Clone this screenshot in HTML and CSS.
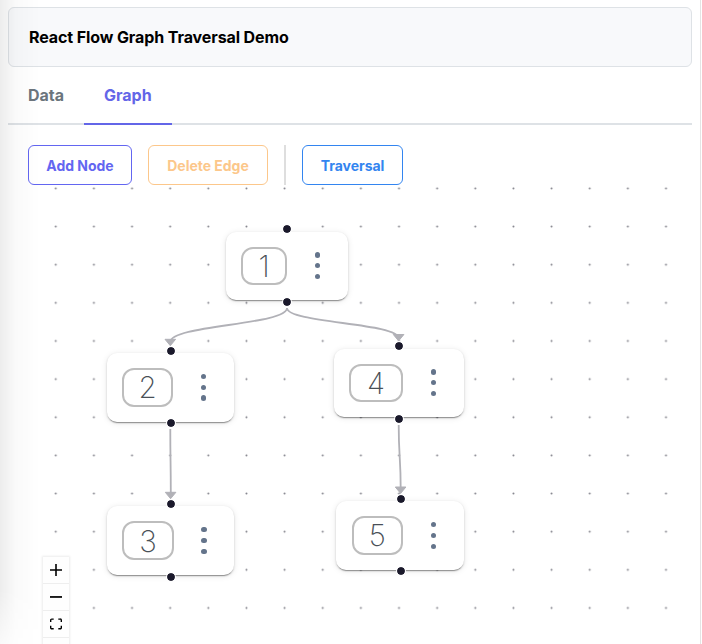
FILE: index.html
```html
<!DOCTYPE html>
<html lang="en">
<head>
<meta charset="utf-8">
<title>React Flow Graph Traversal Demo</title>
<link rel="stylesheet" href="styles.css">
</head>
<body>
<div class="page">
  <header class="header"><span class="title">React Flow Graph Traversal Demo</span></header>
  <nav class="tabs">
    <a class="tab tab-data">Data</a>
    <a class="tab tab-graph active">Graph</a>
  </nav>
  <div class="toolbar">
    <button class="btn add">Add Node</button>
    <button class="btn delete">Delete Edge</button>
    <span class="divider"></span>
    <button class="btn traversal">Traversal</button>
  </div>
  <main class="canvas">
    <svg class="layer" width="664" height="459" viewBox="28 185 664 459">
      <defs>
        <pattern id="grid" x="36.7" y="169.35" width="38.14" height="38.14" patternUnits="userSpaceOnUse">
          <circle cx="19.07" cy="19.07" r="1" fill="#81818a"/>
        </pattern>
      </defs>
      <rect x="28" y="185" width="664" height="459" fill="url(#grid)"/>
      <g class="edges">
        <path d="M287 308C287 325 170.300 325 170.300 342"/>
        <path d="M287 308C287 323 398.500 323 398.500 338"/>
        <path d="M170.300 429C170.300 461 170.800 461 170.800 494"/>
        <path d="M398.700 425C398.700 457 400.700 457 400.700 489"/>
      </g>
      <g class="arrows">
        <path d="M165 339.300h10.600l-5.300 6.400z"/>
        <path d="M393.300 334.500h10.600l-5.300 6.400z"/>
        <path d="M165.300 492.300h10.600l-5.300 6.400z"/>
        <path d="M395.300 487h10.600l-5.300 6.400z"/>
      </g>
    </svg>
    <div class="node n1"><i class="handle top"></i><span class="value">1</span><span class="menu"><i></i><i></i><i></i></span><i class="handle bottom"></i></div>
    <div class="node n2"><i class="handle top"></i><span class="value">2</span><span class="menu"><i></i><i></i><i></i></span><i class="handle bottom"></i></div>
    <div class="node n3"><i class="handle top"></i><span class="value">3</span><span class="menu"><i></i><i></i><i></i></span><i class="handle bottom"></i></div>
    <div class="node n4"><i class="handle top"></i><span class="value">4</span><span class="menu"><i></i><i></i><i></i></span><i class="handle bottom"></i></div>
    <div class="node n5"><i class="handle top"></i><span class="value">5</span><span class="menu"><i></i><i></i><i></i></span><i class="handle bottom"></i></div>
    <div class="controls">
      <div class="control"><svg width="12" height="12" viewBox="0 0 32 32"><path d="M32 18.133H18.133V32h-4.266V18.133H0v-4.266h13.867V0h4.266v13.867H32z"/></svg></div>
      <div class="control"><svg width="12" height="12" viewBox="0 0 32 32"><path d="M0 13.600h32v4.600H0z"/></svg></div>
      <div class="control"><svg width="12" height="12" viewBox="0 0 32 30"><path d="M3.692 4.630c0-.530.400-.938.939-.938h5.215V0H4.708C2.130 0 0 2.054 0 4.630v5.216h3.692V4.630zM27.354 0h-5.200v3.692h5.170c.530 0 .984.400.984.939v5.215H32V4.631A4.624 4.624 0 0027.354 0zm.954 24.830c0 .532-.400.940-.939.940h-5.215v3.768h5.215c2.577 0 4.631-2.130 4.631-4.707v-5.139h-3.692v5.139zm-23.677.940a.919.919 0 01-.939-.940v-5.138H0v5.139c0 2.577 2.130 4.707 4.708 4.707h5.138V25.770H4.631z"/></svg></div>
      <div class="control"></div>
    </div>
  </main>
</div>
</body>
</html>
```
FILE: styles.css
```css
* { box-sizing: border-box; }
html, body { height: 100%; }
body {
  margin: 0;
  overflow: hidden;
  background: #fff;
  font-family: Inter, "Liberation Sans", sans-serif;
}
.page {
  position: relative;
  width: 701px;
  height: 644px;
  padding: 7px 8px 0;
  border-right: 1px solid #e4e4e4;
  overflow: hidden;
}
.page::after {
  content: "";
  position: absolute;
  inset: 0 auto 0 0;
  width: 40px;
  background: linear-gradient(to right, rgba(0,0,0,.07), rgba(0,0,0,.02) 40%, rgba(0,0,0,0));
  -webkit-mask-image: linear-gradient(to bottom, #000 590px, rgba(0,0,0,.3) 644px);
  mask-image: linear-gradient(to bottom, #000 590px, rgba(0,0,0,.3) 644px);
  pointer-events: none;
}
.header {
  display: flex;
  align-items: center;
  height: 60px;
  padding-left: 20px;
  border: 1px solid #dee2e6;
  border-radius: 6px;
  background: #f8f9fb;
}
.title { font-size: 16px; font-weight: 700; letter-spacing: -.1px; color: #000; white-space: nowrap; }
.tabs { display: flex; height: 58px; border-bottom: 2px solid #dee2e6; }
.tab {
  display: flex;
  align-items: center;
  height: 58px;
  padding: 0 20px;
  border-bottom: 2px solid transparent;
  font-size: 16px;
  font-weight: 700;
  color: #6c757d;
}
.tab-data { width: 76px; }
.tab-graph { width: 88px; }
.active { color: #6366e8; border-color: #6366e8; }
.toolbar { display: flex; gap: 16px; height: 60px; padding: 20px 20px 0; }
.btn {
  height: 40px;
  padding: 1px 0 0;
  border: 1px solid currentColor;
  border-radius: 6px;
  background: #fff;
  font: 700 14px Inter, "Liberation Sans", sans-serif;
  letter-spacing: -.02px;
  white-space: nowrap;
}
.add { width: 104px; color: #6366f1; }
.delete { width: 120px; color: #fcc78b; }
.divider { width: 2px; background: #dedede; }
.traversal { width: 101px; color: #3385f0; }
.canvas { position: relative; height: 459px; margin-left: 20px; }
.layer { display: block; }
.edges path { fill: none; stroke: #b1b1b7; stroke-width: 1.8; }
.arrows path { fill: #b1b1b7; stroke: #b1b1b7; stroke-width: 1; stroke-linejoin: round; }
.node {
  position: absolute;
  display: flex;
  align-items: center;
  justify-content: space-between;
  height: 68.500px;
  padding: 0 27.800px 0 15.400px;
  border-radius: 10px;
  background: #fff;
  box-shadow: 0 2px 1px -1px rgba(0,0,0,.3), 0 1px 2px rgba(0,0,0,.18), 0 1px 6px rgba(0,0,0,.1);
}
.n1 { left: 197.800px; top: 46.500px; width: 122.300px; }
.n2 { left: 78.500px; top: 168px; width: 127.700px; }
.n3 { left: 78.900px; top: 321.300px; width: 127.500px; }
.n4 { left: 305.800px; top: 163.500px; width: 130px; }
.n5 { left: 308.300px; top: 316.200px; width: 127.700px; }
.value {
  display: flex;
  align-items: center;
  justify-content: center;
  width: 51.300px;
  height: 38.500px;
  border: 2px solid #bdbdbd;
  border-radius: 12px;
  font-size: 29.500px;
  font-weight: 200;
  color: #495057;
}
.n1 .value { width: 46px; }
.n4 .value { width: 53.500px; }
.menu { display: flex; flex-direction: column; gap: 5.600px; }
.menu i { width: 5.200px; height: 5.200px; border-radius: 50%; background: #64748b; }
.handle {
  position: absolute;
  left: 50%;
  width: 10px;
  height: 10px;
  margin-left: -4.300px;
  border: 1px solid #fff;
  border-radius: 50%;
  background: #1a192b;
  background-clip: padding-box;
}
.n1 .handle, .n4 .handle { margin-left: -5px; }
.top { top: -7.300px; }
.bottom { bottom: -6.800px; }
.controls {
  position: absolute;
  left: 15px;
  top: 372px;
  width: 26px;
  box-shadow: 0 0 2px 1px rgba(0,0,0,.08);
}
.control {
  display: flex;
  align-items: center;
  justify-content: center;
  height: 27px;
  border-bottom: 1px solid #eee;
  background: #fefefe;
}
```
